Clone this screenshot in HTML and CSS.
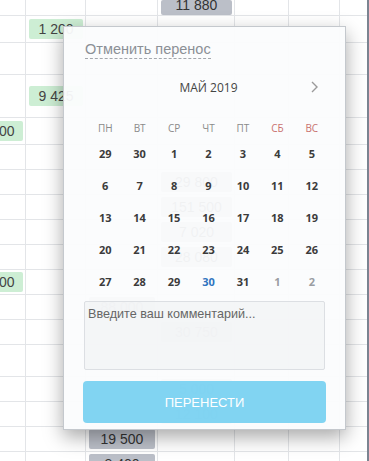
FILE: index.html
```html
<!DOCTYPE html>
<html lang="ru">
<head>
    <meta charset="UTF-8">
    <meta name="viewport" content="width=device-width, initial-scale=1.0">
    <title>Перенос</title>
    <link rel="stylesheet" href="styles.css">
</head>
<body>
    <div class="sheet">
        <div class="row h16"><div></div><div></div><div></div><div class="cell-top"><span class="tag grey">11 880</span></div><div></div><div></div><div></div></div>
        <div class="row h27"><div></div><div><span class="tag green">1 200</span></div><div></div><div></div><div></div><div></div><div></div></div>
        <div class="row h32"><div></div><div></div><div></div><div></div><div></div><div></div><div></div></div>
        <div class="row h43"><div></div><div><span class="tag green">9 425</span></div><div></div><div></div><div></div><div></div><div></div></div>
        <div class="row h27"><div class="cell-end"><span class="tag green wide">5 000</span></div><div></div><div></div><div></div><div></div><div></div><div></div></div>
        <div class="row"><div></div><div></div><div></div><div></div><div></div><div></div><div></div></div>
        <div class="row"><div></div><div></div><div></div><div><span class="tag grey">29 800</span></div><div></div><div></div><div></div></div>
        <div class="row"><div></div><div></div><div></div><div><span class="tag grey">151 500</span></div><div></div><div></div><div></div></div>
        <div class="row"><div></div><div></div><div></div><div><span class="tag grey">7 020</span></div><div></div><div></div><div></div></div>
        <div class="row"><div></div><div></div><div></div><div><span class="tag grey">28 080</span></div><div></div><div></div><div></div></div>
        <div class="row"><div class="cell-end"><span class="tag green wide">3 000</span></div><div></div><div></div><div></div><div></div><div></div><div></div></div>
        <div class="row"><div></div><div></div><div><span class="tag grey">88 000</span></div><div></div><div></div><div></div><div></div></div>
        <div class="row"><div></div><div></div><div></div><div><span class="tag grey">30 750</span></div><div></div><div></div><div></div></div>
        <div class="row h32"><div></div><div></div><div></div><div></div><div></div><div></div><div></div></div>
        <div class="row"><div></div><div></div><div></div><div><span class="tag grey">5 000</span></div><div></div><div></div><div></div></div>
        <div class="row"><div></div><div></div><div></div><div><span class="tag grey">12 100</span></div><div></div><div></div><div></div></div>
        <div class="row"><div></div><div></div><div><span class="tag grey">19 500</span></div><div></div><div></div><div></div><div></div></div>
        <div class="row"><div></div><div></div><div><span class="tag grey">8 400</span></div><div></div><div></div><div></div><div></div></div>
    </div>

    <div class="popup">
        <a href="#" class="cancel-link">Отменить перенос</a>

        <div class="month-bar">
            <span class="month-title">МАЙ 2019</span>
            <button class="month-next" aria-label="Следующий месяц">
                <svg width="7" height="12" viewBox="0 0 7 12"><polyline points="1,1 6,6 1,11" fill="none" stroke="#9a9a9a" stroke-width="1.4"/></svg>
            </button>
        </div>

        <div class="weekdays">
            <span>ПН</span><span>ВТ</span><span>СР</span><span>ЧТ</span><span>ПТ</span><span class="weekend">СБ</span><span class="weekend">ВС</span>
        </div>

        <div class="days">
            <span>29</span><span>30</span><span>1</span><span>2</span><span>3</span><span>4</span><span>5</span>
            <span>6</span><span>7</span><span>8</span><span>9</span><span>10</span><span>11</span><span>12</span>
            <span>13</span><span>14</span><span>15</span><span>16</span><span>17</span><span>18</span><span>19</span>
            <span>20</span><span>21</span><span>22</span><span>23</span><span>24</span><span>25</span><span>26</span>
            <span>27</span><span>28</span><span>29</span><span class="today">30</span><span>31</span><span class="other">1</span><span class="other">2</span>
        </div>

        <textarea class="comment" placeholder="Введите ваш комментарий..."></textarea>

        <button class="submit-btn">ПЕРЕНЕСТИ</button>
    </div>
</body>
</html>
```

FILE: styles.css
```css
:root {
    --line-color: #e3e5e8;
    --green-tag: #cdeed4;
    --grey-tag: #bbbfc8;
    --text-dark: #3b3b3b;
    --text-muted: #8b9096;
    --weekend: #c9726f;
    --today: #2f74c0;
    --btn-color: rgba(115, 207, 241, 0.9);
}

* {
    margin: 0;
    padding: 0;
    box-sizing: border-box;
}

body {
    font-family: 'Liberation Sans', Arial, sans-serif;
    background: #ffffff;
    overflow: hidden;
    position: relative;
    width: 369px;
    height: 461px;
}

/* background table */
.sheet {
    width: 369px;
    border-right: 2px solid #7b8491;
}

.row {
    display: grid;
    grid-template-columns: 26px 60px 72px 77px 54px 51px 27px;
    height: 25px;
}

.row.h16 { height: 16px; }
.row.h27 { height: 27px; }
.row.h32 { height: 32px; }
.row.h43 { height: 43px; }

.row > div {
    display: flex;
    align-items: center;
    justify-content: center;
    padding: 0 2px 0 3px;
    border-right: 1px solid var(--line-color);
    border-bottom: 1px solid var(--line-color);
}

.row > div:last-child {
    border-right: none;
}

.row > .cell-top {
    align-items: flex-end;
    padding-bottom: 0;
}

.row > .cell-end {
    justify-content: flex-end;
}

.tag {
    display: block;
    width: 100%;
    height: 20px;
    line-height: 20px;
    text-align: center;
    font-size: 14px;
    color: #444;
    border-radius: 2px;
}

.tag.green {
    background: var(--green-tag);
}

.tag.grey {
    background: var(--grey-tag);
    color: #333;
}

.tag.wide {
    width: 52px;
    flex-shrink: 0;
}

.cell-top .tag {
    height: 15px;
    line-height: 10px;
}

/* popup */
.popup {
    position: absolute;
    left: 63px;
    top: 26px;
    width: 283px;
    height: 404px;
    padding: 14px 20px 0 20px;
    background: rgba(251, 252, 253, 0.95);
    border: 1px solid #c4c8cd;
    box-shadow: 0 7px 18px rgba(0, 0, 0, 0.34);
    display: flex;
    flex-direction: column;
}

.cancel-link {
    align-self: flex-start;
    font-size: 14.5px;
    line-height: 17px;
    color: var(--text-muted);
    text-decoration: none;
    border-bottom: 1px dashed #a3a7ad;
    margin-left: 1px;
}

.month-bar {
    position: relative;
    margin: 13px 0 0 4px;
    width: 241px;
    height: 30px;
    display: flex;
    align-items: center;
    justify-content: center;
}

.month-title {
    font-family: 'Open Sans', sans-serif;
    font-size: 12px;
    color: #444;
}

.month-next {
    position: absolute;
    right: 11px;
    top: 9px;
    background: none;
    border: none;
    display: flex;
}

.weekdays,
.days {
    display: grid;
    grid-template-columns: repeat(7, 1fr);
    width: 241px;
    margin-left: 4px;
    font-family: 'Open Sans', sans-serif;
    text-align: center;
}

.weekdays {
    margin-top: 16px;
    height: 20px;
    line-height: 20px;
    font-size: 10px;
    color: #8a8a8a;
}

.weekdays .weekend {
    color: var(--weekend);
}

.days {
    grid-auto-rows: 32px;
    font-size: 11px;
    font-weight: 700;
    color: var(--text-dark);
}

.days span {
    line-height: 32px;
}

.days .today {
    color: var(--today);
}

.days .other {
    color: #9a9da2;
}

.comment {
    margin-top: 3px;
    width: 241px;
    height: 69px;
    padding: 5px 3px;
    font-family: 'Liberation Sans', Arial, sans-serif;
    font-size: 12.6px;
    background: rgba(240, 242, 244, 0.6);
    border: 1px solid #dcdfe3;
    border-radius: 2px;
    resize: none;
}

.comment::placeholder {
    color: #666;
}

.submit-btn {
    margin-top: 11px;
    width: 243px;
    margin-left: -1px;
    height: 42px;
    border: none;
    border-radius: 4px;
    background: var(--btn-color);
    color: #ffffff;
    font-family: 'Liberation Sans', Arial, sans-serif;
    font-size: 13px;
    cursor: pointer;
}
```
